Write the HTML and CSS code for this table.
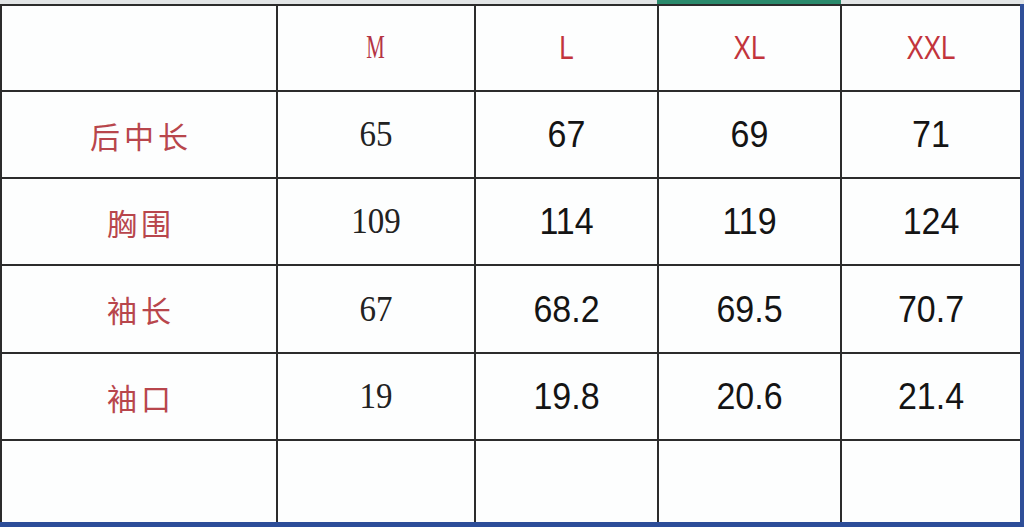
FILE: index.html
```html
<!DOCTYPE html>
<html lang="zh-CN">
<head>
<meta charset="utf-8">
<title>尺码表</title>
<link rel="stylesheet" href="styles.css">
</head>
<body>
<div class="page">
  <div class="topstrip"><div class="tab-mark"></div></div>
  <div class="chart">
    <div class="cell"></div>
    <div class="cell"><span class="size size-serif">M</span></div>
    <div class="cell"><span class="size">L</span></div>
    <div class="cell"><span class="size">XL</span></div>
    <div class="cell"><span class="size">XXL</span></div>

    <div class="cell"><span class="label">后中长</span></div>
    <div class="cell"><span class="num num-serif">65</span></div>
    <div class="cell"><span class="num">67</span></div>
    <div class="cell"><span class="num">69</span></div>
    <div class="cell"><span class="num">71</span></div>

    <div class="cell"><span class="label">胸围</span></div>
    <div class="cell"><span class="num num-serif">109</span></div>
    <div class="cell"><span class="num">114</span></div>
    <div class="cell"><span class="num">119</span></div>
    <div class="cell"><span class="num">124</span></div>

    <div class="cell"><span class="label">袖长</span></div>
    <div class="cell"><span class="num num-serif">67</span></div>
    <div class="cell"><span class="num">68.2</span></div>
    <div class="cell"><span class="num">69.5</span></div>
    <div class="cell"><span class="num">70.7</span></div>

    <div class="cell"><span class="label">袖口</span></div>
    <div class="cell"><span class="num num-serif">19</span></div>
    <div class="cell"><span class="num">19.8</span></div>
    <div class="cell"><span class="num">20.6</span></div>
    <div class="cell"><span class="num">21.4</span></div>

    <div class="cell"></div>
    <div class="cell"></div>
    <div class="cell"></div>
    <div class="cell"></div>
    <div class="cell"></div>
  </div>
</div>
</body>
</html>
```

FILE: styles.css
```css
* { box-sizing: border-box; }
html, body { margin: 0; padding: 0; background: #ffffff; }
.page {
  width: 1024px;
  height: 527px;
  overflow: hidden;
  display: flex;
  flex-direction: column;
}
.topstrip {
  height: 4px;
  background: #e2e5e6;
  position: relative;
}
.tab-mark {
  position: absolute;
  left: 657px;
  width: 184px;
  top: 0;
  height: 4px;
  background: #2a8a6c;
}
.chart {
  flex: 1;
  display: grid;
  grid-template-columns: 274px 196px 181px 181px 178px;
  grid-template-rows: 84px 85px 85px 86px 85px 81px;
  gap: 2px;
  background: #2c2c2c;
  padding: 2px 0 0 2px;
  border-right: 4px solid #2f4f98;
  border-bottom: 5px solid #2c4d99;
}
.cell {
  background: #fdfefe;
  display: flex;
  align-items: center;
  justify-content: center;
}
.size {
  font-family: "Liberation Sans", Arial, sans-serif;
  font-size: 26px;
  color: #c2343c;
  transform: scaleY(1.25);
  display: inline-block;
}
.size-serif {
  font-family: "Liberation Serif", "Times New Roman", serif;
  color: #b43444;
  transform: scale(0.8, 1.3);
}
.num {
  font-family: "Liberation Sans", Arial, sans-serif;
  font-size: 34px;
  color: #141414;
  display: inline-block;
  transform: scaleY(1.1);
}
.num-serif {
  font-family: "Liberation Serif", "Times New Roman", serif;
  font-size: 33px;
  color: #222222;
}
.label {
  font-family: "Noto Sans CJK SC", "Noto Sans CJK JP", sans-serif;
  font-weight: 400;
  font-size: 30px;
  letter-spacing: 4px;
  margin-right: -4px;
  color: #b8464c;
}
```
